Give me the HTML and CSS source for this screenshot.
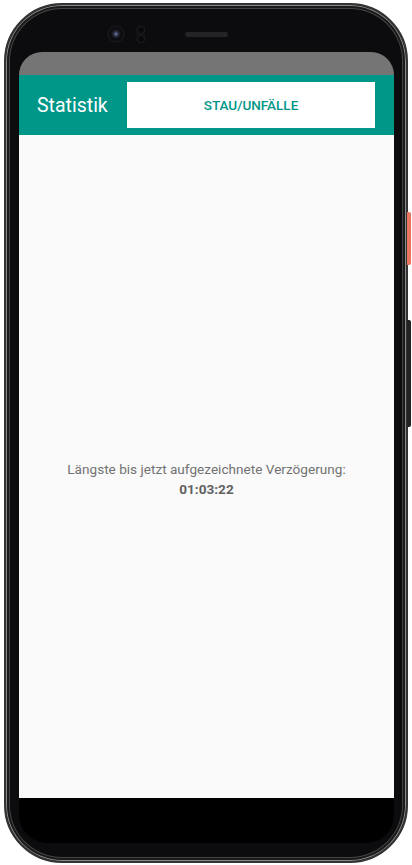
FILE: index.html
```html
<!DOCTYPE html>
<html lang="de">
<head>
    <meta charset="UTF-8">
    <meta name="viewport" content="width=device-width, initial-scale=1.0">
    <title>Statistik</title>
    <link rel="stylesheet" href="styles.css">
</head>
<body>
    <div class="phone">
        <div class="side-key power"></div>
        <div class="side-key volume"></div>

        <div class="bezel-top">
            <div class="camera"></div>
            <div class="sensor">
                <span></span>
                <span></span>
            </div>
            <div class="speaker"></div>
        </div>

        <div class="screen">
            <div class="status-bar"></div>

            <div class="app-bar">
                <h1>Statistik</h1>
                <div class="tab">STAU/UNFÄLLE</div>
            </div>

            <div class="content">
                <p>Längste bis jetzt aufgezeichnete Verzögerung:<br><b>01:03:22</b></p>
            </div>

            <div class="nav-bar"></div>
        </div>
    </div>
</body>
</html>
```

FILE: styles.css
```css
:root {
    --teal: #009688;
    --status: #757575;
    --bg: #FAFAFA;
    --frame: #0c0b0e;
}

body {
    margin: 0;
    padding: 0;
    background-color: white;
    font-family: Roboto, 'Noto Sans', sans-serif;
}

.phone {
    position: relative;
    box-sizing: border-box;
    width: 404px;
    height: 860px;
    margin: 3px 0 0 4px;
    padding-left: 13px;
    border: 2px solid #333;
    border-radius: 58px;
    background-color: var(--frame);
    box-shadow: inset 0 0 0 1px #8a8a8a, inset 0 0 0 3px #1a1a1a, inset 0 0 0 4px #444;
    display: flex;
    flex-direction: column;
}

.side-key {
    position: absolute;
    right: -5px;
    width: 4px;
    border-radius: 0 2px 2px 0;
}

.side-key.power {
    top: 207px;
    height: 53px;
    background-color: #e8765e;
}

.side-key.volume {
    top: 315px;
    height: 107px;
    background-color: #222;
}

.bezel-top {
    height: 47px;
    display: flex;
    align-items: flex-start;
    padding-top: 20px;
    box-sizing: border-box;
}

.camera {
    width: 18px;
    height: 18px;
    margin-left: 88px;
    border-radius: 50%;
    background: radial-gradient(circle at 50% 50%, #8d95b5 0, #3e4360 1.5px, #131419 4px, #0a0a0e 6px, #17171b 8px, #101013 9px);
}

.sensor {
    width: 9px;
    height: 18px;
    margin-left: 11px;
    border-radius: 5px;
    background-color: #111114;
    display: flex;
    flex-direction: column;
    justify-content: space-around;
    align-items: center;
}

.sensor span {
    width: 6px;
    height: 6px;
    border-radius: 50%;
    background-color: #0a0a0d;
    box-shadow: 0 0 0 1px #1c1c21;
}

.speaker {
    width: 43px;
    height: 5px;
    margin: 7px 0 0 40px;
    border-radius: 3px;
    background-color: #242428;
}

.screen {
    width: 375px;
    display: flex;
    flex-direction: column;
}

.status-bar {
    height: 23px;
    background-color: var(--status);
    border-radius: 25px 25px 0 0;
}

.app-bar {
    height: 60px;
    background-color: var(--teal);
    display: flex;
    align-items: center;
    padding: 0 19px 0 18px;
}

.app-bar h1 {
    flex: 1;
    margin: 0;
    color: white;
    font-size: 19.5px;
    font-weight: normal;
}

.tab {
    width: 248px;
    height: 46px;
    background-color: white;
    color: var(--teal);
    font-size: 13.5px;
    font-weight: 500;
    display: flex;
    justify-content: center;
    align-items: center;
}

.content {
    height: 663px;
    box-sizing: border-box;
    padding-top: 25px;
    background-color: var(--bg);
    display: flex;
    justify-content: center;
    align-items: center;
}

.content p {
    margin: 0;
    text-align: center;
    font-size: 13.6px;
    line-height: 20px;
    color: #727272;
}

.content b {
    color: #616161;
}

.nav-bar {
    height: 45px;
    background-color: black;
    border-radius: 0 0 28px 28px;
}
```
